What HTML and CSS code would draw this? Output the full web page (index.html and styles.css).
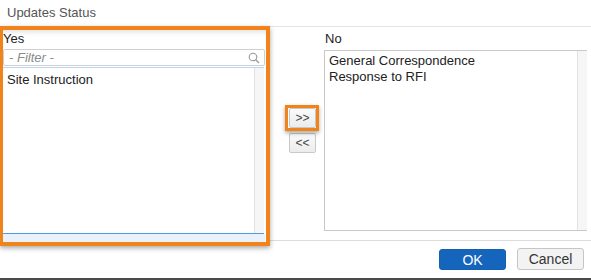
FILE: index.html
```html
<!DOCTYPE html>
<html lang="en">
<head>
    <meta charset="UTF-8">
    <title>Updates Status</title>
    <link rel="stylesheet" href="styles.css">
</head>
<body>
    <div class="dialog">
        <div class="header">Updates Status</div>
        <div class="main">
            <div class="pane pane-yes highlight">
                <label>Yes</label>
                <div class="filter">
                    <span class="placeholder">- Filter -</span>
                    <svg class="search" width="12" height="12" viewBox="0 0 12 12">
                        <circle cx="5" cy="5" r="3.8" fill="none" stroke="#9a9a9a" stroke-width="1.1"/>
                        <line x1="7.8" y1="7.8" x2="11" y2="11" stroke="#9a9a9a" stroke-width="1.3"/>
                    </svg>
                </div>
                <div class="list list-yes">
                    <div class="items">
                        <div>Site Instruction</div>
                    </div>
                    <div class="track"></div>
                </div>
                <div class="tint"></div>
            </div>
            <div class="moves">
                <span class="ring"><button class="move">&gt;&gt;</button></span>
                <button class="move">&lt;&lt;</button>
            </div>
            <div class="pane pane-no">
                <label>No</label>
                <div class="list list-no">
                    <div class="items">
                        <div>General Correspondence</div>
                        <div>Response to RFI</div>
                    </div>
                    <div class="track"></div>
                </div>
            </div>
        </div>
        <div class="footer">
            <button class="btn btn-ok">OK</button>
            <button class="btn btn-cancel">Cancel</button>
        </div>
        <div class="bar"></div>
    </div>
</body>
</html>
```

FILE: styles.css
```css
*
{
    box-sizing: border-box;
}
body
{
    margin: 0;
    background: #fff;
    font-family: "Liberation Sans", Arial, sans-serif;
    font-size: 13px;
    color: #222;
}
.dialog
{
    width: 591px;
    height: 280px;
    overflow: hidden;
}
.header
{
    height: 27px;
    padding: 5px 0 0 7px;
    color: #555;
    border-bottom: 1px solid #e4e4e4;
}
.main
{
    display: flex;
    align-items: flex-start;
    height: 213px;
}
.pane label
{
    display: block;
    height: 16px;
    line-height: 16px;
    padding-top: 1px;
}
.pane-yes
{
    width: 270px;
    height: 220px;
    margin: -1px 0 -6px 0;
    display: flex;
    flex-direction: column;
    padding-right: 1px;
    background: #fff;
}
.highlight
{
    position: relative;
    z-index: 1;
    border: solid #f0841a;
    border-width: 4px 4px 4px 3px;
    box-shadow: 0 2px 5px rgba(0, 0, 0, 0.35), inset 0 5px 5px -3px rgba(0, 0, 0, 0.12);
}
.filter
{
    display: flex;
    align-items: center;
    justify-content: space-between;
    height: 17px;
    margin-top: 3px;
    padding: 0 4px 0 5px;
    border: 1px solid #cfcfcf;
    border-radius: 2px;
    background: #fff;
}
.placeholder
{
    font-style: italic;
    color: #8a8a8a;
}
.list
{
    display: flex;
    background: #fff;
}
.list-yes
{
    height: 167px;
    margin-top: 1px;
    border-top: 1px solid #b9d4ee;
    border-bottom: 1px solid #4d9de6;
    margin-right: 1px;
}
.items
{
    flex: 1;
    padding: 4px 0 0 4px;
    line-height: 16px;
}
.track
{
    width: 10px;
    background: #f6f6f6;
    border-left: 1px solid #e2e2e2;
}
.tint
{
    flex: 1;
    background: #e9f1fa;
}
.moves
{
    width: 54px;
    padding: 81px 0 0 19px;
    display: flex;
    flex-direction: column;
    align-items: flex-start;
    gap: 5px;
}
.ring
{
    position: relative;
    display: block;
    margin: -3px 0 -3px -4px;
    border: 3px solid #f0841a;
    padding: 0 0 0 1px;
    box-shadow: 0 2px 4px rgba(0, 0, 0, 0.35);
}
.move
{
    display: block;
    width: 27px;
    height: 20px;
    padding: 0;
    font-family: "Liberation Sans", Arial, sans-serif;
    font-size: 12px;
    color: #444;
    background: linear-gradient(#fafafa, #ececec);
    border: 1px solid #c8c8c8;
    border-radius: 2px;
}
.pane-no
{
    width: 263px;
    padding-top: 3px;
}
.pane-no label
{
    padding-left: 1px;
}
.list-no
{
    height: 181px;
    margin-top: 4px;
    border: 1px solid #c9c9c9;
    border-right: none;
}
.list-no .items
{
    padding-top: 2px;
}
.footer
{
    height: 38px;
    border-top: 1px solid #dcdcdc;
    display: flex;
    justify-content: flex-end;
    align-items: flex-start;
    gap: 11px;
    padding: 8px 7px 0 0;
}
.btn
{
    height: 21px;
    width: 67px;
    padding: 0;
    border-radius: 3px;
    font-family: "Liberation Sans", Arial, sans-serif;
    font-size: 14px;
}
.btn-ok
{
    background: #1565bd;
    border: 1px solid #1460b3;
    color: #fff;
}
.btn-cancel
{
    background: #f3f3f4;
    border: 1px solid #c6c6c6;
    color: #333;
    margin-top: -1px;
    height: 22px;
}
.bar
{
    height: 2px;
    background: #4b4b4b;
}
```
